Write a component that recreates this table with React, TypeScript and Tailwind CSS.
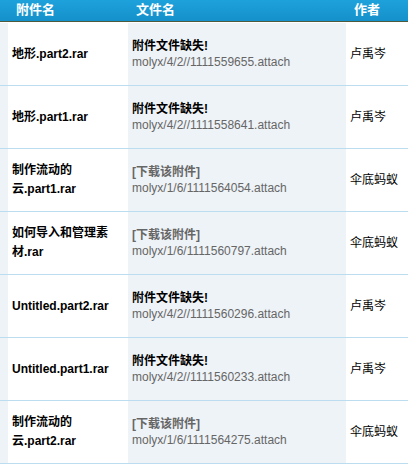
import React from "react";

type Row = {
  name: string[];
  missing: boolean;
  path: string;
  author: string;
};

const rows: Row[] = [
  { name: ["地形.part2.rar"], missing: true, path: "molyx/4/2//1111559655.attach", author: "卢禹岑" },
  { name: ["地形.part1.rar"], missing: true, path: "molyx/4/2//1111558641.attach", author: "卢禹岑" },
  { name: ["制作流动的", "云.part1.rar"], missing: false, path: "molyx/1/6/1111564054.attach", author: "伞底蚂蚁" },
  { name: ["如何导入和管理素", "材.rar"], missing: false, path: "molyx/1/6/1111560797.attach", author: "伞底蚂蚁" },
  { name: ["Untitled.part2.rar"], missing: true, path: "molyx/4/2//1111560296.attach", author: "卢禹岑" },
  { name: ["Untitled.part1.rar"], missing: true, path: "molyx/4/2//1111560233.attach", author: "卢禹岑" },
  { name: ["制作流动的", "云.part2.rar"], missing: false, path: "molyx/1/6/1111564275.attach", author: "伞底蚂蚁" },
];

const font = {
  fontFamily: '"Liberation Sans", Arial, "Noto Sans CJK SC", sans-serif',
};

export default function App() {
  return (
    <div className="w-[408px] h-[464px] overflow-hidden bg-white text-[12px]" style={font}>
      <div className="grid grid-cols-[8px_120px_218px_62px] h-[22px] bg-gradient-to-b from-[#1ea2dc] to-[#1490ca] border-b border-[#4d5a3e] text-white font-bold text-[13px] leading-[20px]">
        <div />
        <div className="pl-2">附件名</div>
        <div className="pl-2">文件名</div>
        <div className="pl-2">作者</div>
      </div>
      <div className="pt-px">
        {rows.map((row, idx) => (
          <div
            key={idx}
            className="grid grid-cols-[8px_120px_218px_62px] h-[63px] border-b border-[#bcdcef]"
          >
            <div className="bg-[#eef3f7]" />
            <div className="flex flex-col justify-center pl-1 font-bold text-black leading-[19px]">
              {row.name.map((line, i) => (
                <div key={i}>{line}</div>
              ))}
            </div>
            <div className="flex flex-col justify-center bg-[#eef3f7] pl-1 leading-[16px]">
              {row.missing ? (
                <div className="font-bold text-black">附件文件缺失!</div>
              ) : (
                <div className="font-bold text-[#666666]">[下载该附件]</div>
              )}
              <div className="text-[#666666]">{row.path}</div>
            </div>
            <div className="flex items-center pl-1 text-black">{row.author}</div>
          </div>
        ))}
      </div>
    </div>
  );
}
